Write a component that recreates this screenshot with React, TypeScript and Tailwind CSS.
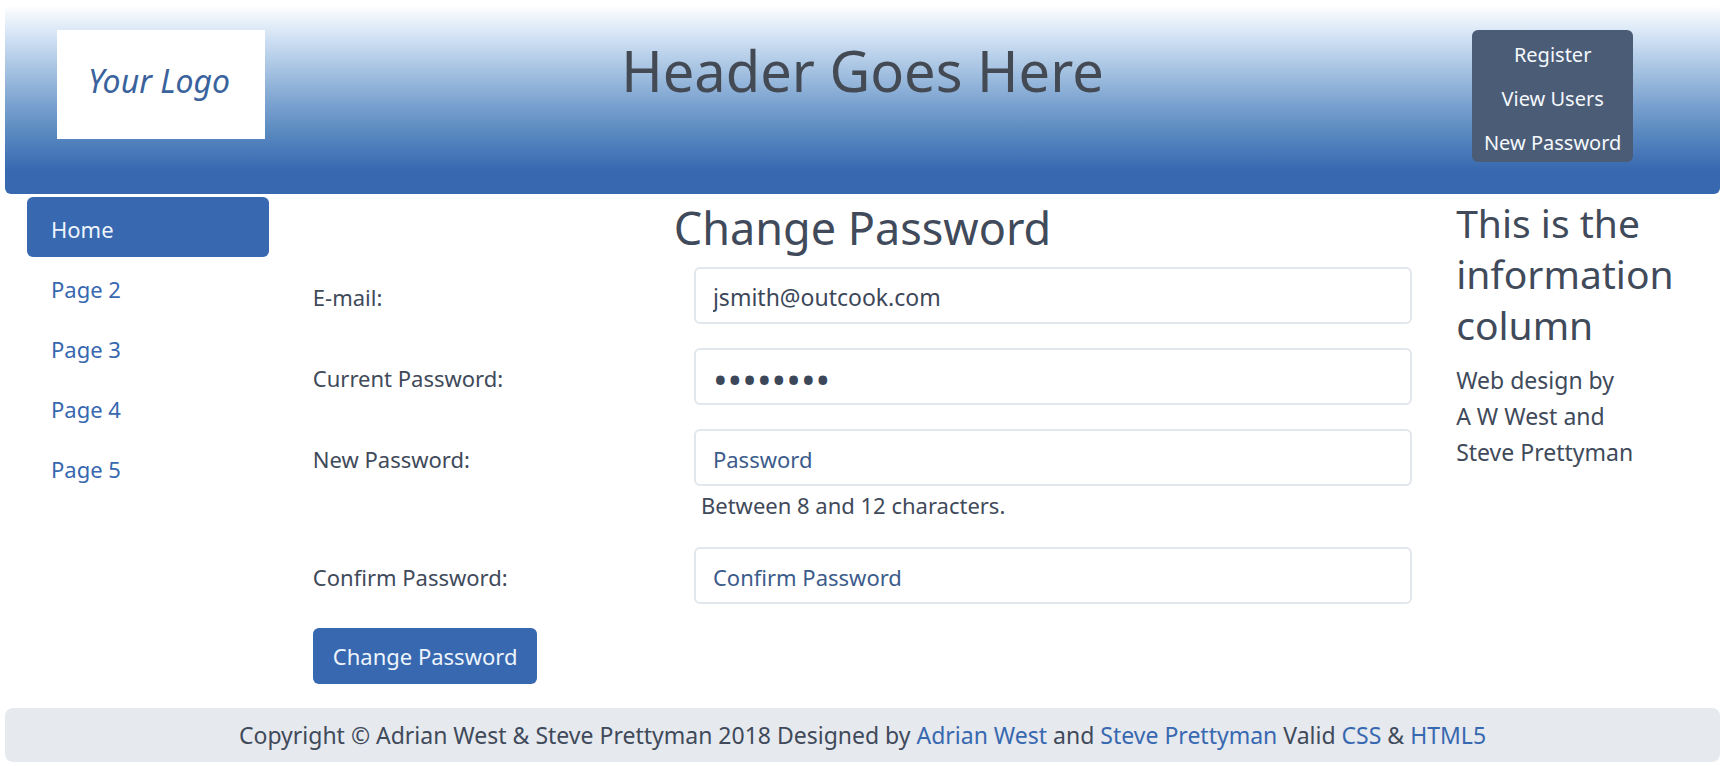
import React from "react";

const pages = ["Home", "Page 2", "Page 3", "Page 4", "Page 5"];
const actions = ["Register", "View Users", "New Password"];

type FieldProps = {
  id: string;
  label: string;
  type: string;
  value?: string;
  placeholder?: string;
  hint?: string;
};

function Field({ id, label, type, value, placeholder, hint }: FieldProps) {
  const size = !value ? "text-[22px]" : type === "password" ? "text-[39px]" : "text-[23px]";
  return (
    <div className="grid grid-cols-12 pb-6">
      <label htmlFor={id} className="col-span-4 px-[22px] pt-3">
        {label}
      </label>
      <div className="col-span-8 px-[22px]">
        <input
          id={id}
          type={type}
          defaultValue={value}
          placeholder={placeholder}
          className={`block h-[57px] w-full rounded-md border-2 border-[#e2e7ee] bg-white px-[17px] pt-[3px] text-[#3c475a] placeholder:text-[#3c5c8c] placeholder:opacity-100 ${size}`}
        />
        {hint && <p className="pt-px pl-[7px]">{hint}</p>}
      </div>
    </div>
  );
}

export default function App() {
  return (
    <div className="bg-white p-[5px] font-['Noto_Sans','Open_Sans',sans-serif] text-[22px] leading-9 text-[#404a5a]">
      <header className="grid min-h-[189px] grid-cols-12 items-start rounded-md bg-[linear-gradient(to_bottom,#ffffff_0%,#cfe0f3_18%,#a9c5e3_33%,#82a8d3_49%,#5b8ac1_67%,#3768b0_88%,#3768b0_100%)] pt-[25px]">
        <div className="col-span-2 pl-[52px]">
          <div className="flex h-[109px] w-[208px] items-center justify-center bg-white pr-1 pb-2 text-[32px] text-[#3a629c] italic">
            Your Logo
          </div>
        </div>
        <h1 className="col-span-8 pt-1 text-center text-[56px] leading-[72px] text-[#444a54]">Header Goes Here</h1>
        <nav className="col-span-2 pl-[38px]">
          <ul className="w-[161px] rounded-md bg-[#4b5c76] text-center text-[20px] leading-[38px] text-[#f4f8fd]">
            {actions.map((a) => (
              <li key={a}>
                <a href="#" className="block pt-[6px]">
                  {a}
                </a>
              </li>
            ))}
          </ul>
        </nav>
      </header>

      <div className="grid grid-cols-12 pt-[3px]">
        <nav className="col-span-2 px-[22px]">
          <ul>
            {pages.map((p, i) => (
              <li key={p}>
                <a
                  href="#"
                  className={
                    i === 0
                      ? "block rounded-md bg-[#3768b0] px-6 pt-3.5 pb-2.5 text-[#eef4fc]"
                      : "block px-6 pt-3.5 pb-2.5 text-[#3768b0]"
                  }
                >
                  {p}
                </a>
              </li>
            ))}
          </ul>
        </nav>

        <main className="col-span-8">
          <h2 className="pt-[2px] pb-[11px] text-center text-[45px] leading-[57px]">Change Password</h2>
          <form>
            <Field id="email" label="E-mail:" type="email" value="jsmith@outcook.com" />
            <Field id="current" label="Current Password:" type="password" value="password" />
            <Field
              id="new"
              label="New Password:"
              type="password"
              placeholder="Password"
              hint="Between 8 and 12 characters."
            />
            <Field id="confirm" label="Confirm Password:" type="password" placeholder="Confirm Password" />
            <div className="px-[22px] pb-6">
              <button type="button" className="h-14 rounded-md bg-[#3768b0] px-5 text-[#eef4fc]">
                Change Password
              </button>
            </div>
          </form>
        </main>

        <aside className="col-span-2 px-[22px]">
          <h3 className="pb-3 text-[39px] leading-[51px]">This is the information column</h3>
          <p className="text-[23px]">
            Web design by
            <br />A W West and
            <br />
            Steve Prettyman
          </p>
        </aside>
      </div>

      <footer className="rounded-lg bg-[#e6e9ee] py-[9px] text-center text-[23px]">
        Copyright © Adrian West &amp; Steve Prettyman 2018 Designed by{" "}
        <a href="#" className="text-[#3768b0]">Adrian West</a> and{" "}
        <a href="#" className="text-[#3768b0]">Steve Prettyman</a> Valid{" "}
        <a href="#" className="text-[#3768b0]">CSS</a> &amp;{" "}
        <a href="#" className="text-[#3768b0]">HTML5</a>
      </footer>
    </div>
  );
}
